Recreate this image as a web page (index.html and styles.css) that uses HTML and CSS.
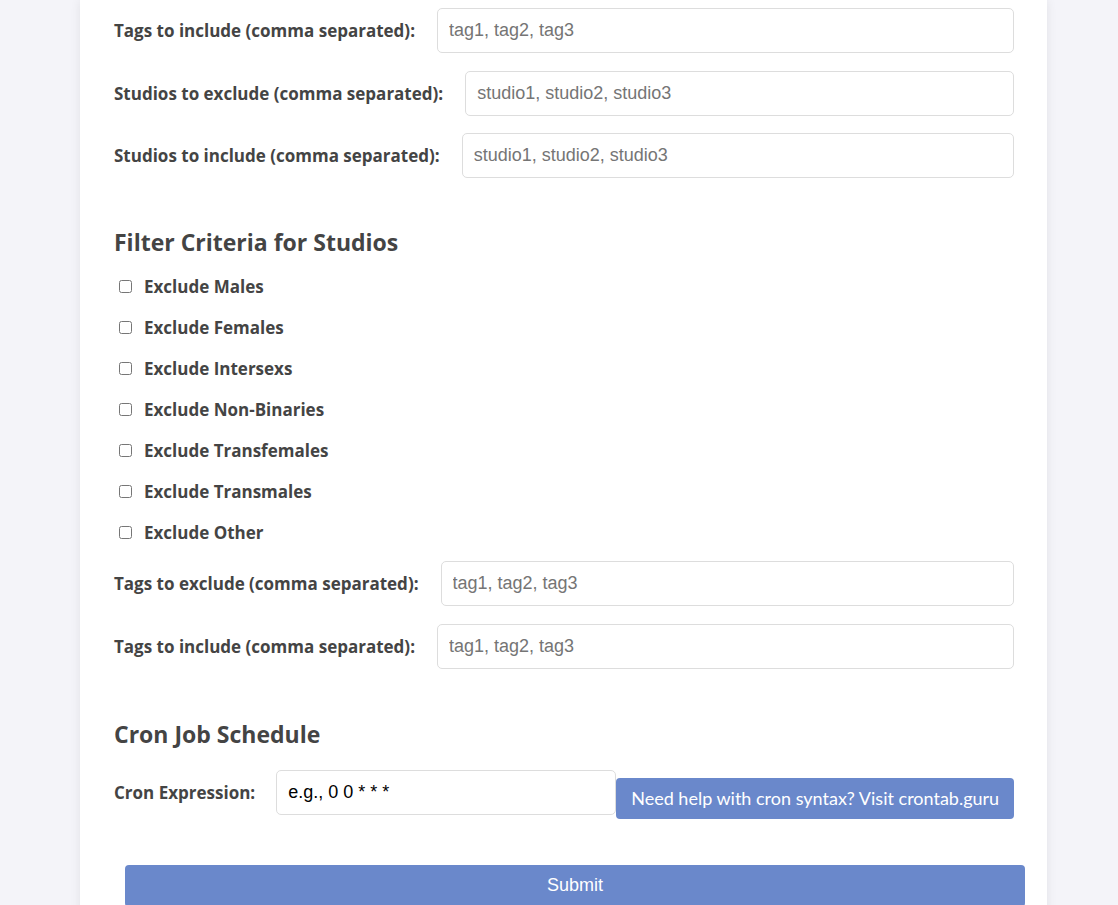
FILE: index.html
```html
<!DOCTYPE html>
<html lang="en">
<head>
<meta charset="utf-8">
<title>Settings</title>
<link rel="stylesheet" href="styles.css">
</head>
<body>
<div class="card">
  <form class="form">
    <div class="row">
      <label class="label">Tags to include (comma separated):</label>
      <input class="text" type="text" placeholder="tag1, tag2, tag3">
    </div>
    <div class="row">
      <label class="label">Studios to exclude (comma separated):</label>
      <input class="text" type="text" placeholder="studio1, studio2, studio3">
    </div>
    <div class="row">
      <label class="label">Studios to include (comma separated):</label>
      <input class="text" type="text" placeholder="studio1, studio2, studio3">
    </div>

    <h2 class="heading">Filter Criteria for Studios</h2>
    <label class="check"><input type="checkbox"><span>Exclude Males</span></label>
    <label class="check"><input type="checkbox"><span>Exclude Females</span></label>
    <label class="check"><input type="checkbox"><span>Exclude Intersexs</span></label>
    <label class="check"><input type="checkbox"><span>Exclude Non-Binaries</span></label>
    <label class="check"><input type="checkbox"><span>Exclude Transfemales</span></label>
    <label class="check"><input type="checkbox"><span>Exclude Transmales</span></label>
    <label class="check"><input type="checkbox"><span>Exclude Other</span></label>
    <div class="row">
      <label class="label">Tags to exclude (comma separated):</label>
      <input class="text" type="text" placeholder="tag1, tag2, tag3">
    </div>
    <div class="row">
      <label class="label">Tags to include (comma separated):</label>
      <input class="text" type="text" placeholder="tag1, tag2, tag3">
    </div>

    <h2 class="heading heading-cron">Cron Job Schedule</h2>
    <div class="row cron-row">
      <label class="label">Cron Expression:</label>
      <input class="text cron" type="text" value="e.g., 0 0 * * *">
      <a class="help" href="#">Need help with cron syntax? Visit crontab.guru</a>
    </div>

    <button class="submit" type="button">Submit</button>
  </form>
</div>
</body>
</html>
```

FILE: styles.css
```css
html, body {
  margin: 0;
  padding: 0;
  background: #f4f4f9;
  overflow: hidden;
}

body {
  font-family: "Open Sans", Lato, sans-serif;
  color: #444;
}

.card {
  margin: 0 71px 0 80px;
  background: #fff;
  box-shadow: 0 0 10px rgba(0, 0, 0, 0.08);
  padding: 8px 33px 40px 34px;
  min-height: 1000px;
  box-sizing: border-box;
}

.form {
  width: 900px;
}

.row {
  display: flex;
  align-items: center;
  gap: 22px;
  margin-bottom: 17.5px;
}

.label {
  font-weight: 700;
  font-size: 17px;
  color: #444;
  white-space: nowrap;
}

.text {
  flex: 1;
  min-width: 0;
  height: 45px;
  box-sizing: border-box;
  border: 1px solid #ddd;
  border-radius: 5px;
  padding: 0 11px;
  font-family: "Liberation Sans", Arial, sans-serif;
  font-size: 18px;
  color: #000;
  background: #fff;
  outline: none;
}

.text::placeholder {
  color: #757575;
}

.heading {
  font-size: 23px;
  font-weight: 700;
  color: #444;
  margin: 50px 0 17px 0;
  line-height: 29px;
}

.heading-cron {
  margin-top: 51px;
}

.check {
  display: flex;
  align-items: center;
  height: 24px;
  margin-bottom: 17px;
  font-weight: 700;
  font-size: 17px;
  color: #444;
}

.check input {
  width: 13px;
  height: 13px;
  margin: 0 12px 0 5px;
}

.cron-row {
  align-items: flex-start;
  gap: 0;
  margin-top: 21px;
  margin-bottom: 46px;
}

.cron-row .label {
  margin-right: 21px;
  line-height: 45px;
}

.text.cron {
  flex: 0 0 340px;
}

.help {
  margin-left: 0;
  margin-top: 8px;
  background: #6a88cb;
  color: #fff;
  text-decoration: none;
  font-family: Lato, sans-serif;
  font-size: 18px;
  line-height: 41px;
  padding: 0 15px;
  border-radius: 4px;
  white-space: nowrap;
}

.submit {
  display: block;
  margin-left: 11px;
  width: 900px;
  height: 42px;
  border: none;
  border-radius: 4px;
  background: #6a88cb;
  color: #fff;
  font-family: "Liberation Sans", Arial, sans-serif;
  font-size: 18px;
}
```
